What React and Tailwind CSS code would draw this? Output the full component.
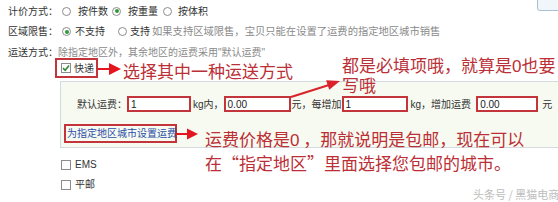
import React from 'react';

const font = { fontFamily: '"Liberation Sans", "Noto Sans CJK SC", sans-serif' };
const cjk = { fontFamily: '"Noto Sans CJK SC", "Liberation Sans", sans-serif' };

function Radio({ checked }) {
    return (
        <span className="w-[9px] h-[9px] rounded-full border border-[#8c8c8c] bg-white flex items-center justify-center shrink-0">
            {checked && <span className="w-[4px] h-[4px] rounded-full bg-[#2f9a3c]" />}
        </span>
    );
}

function Box({ checked }) {
    return (
        <span className="w-[10px] h-[10px] border border-[#8c8c8c] bg-white flex items-center justify-center shrink-0">
            {checked && (
                <svg width="8" height="8" viewBox="0 0 8 8">
                    <path d="M1 4.2 L3.2 6.3 L7 1.6" fill="none" stroke="#2f8a35" strokeWidth="1.6" />
                </svg>
            )}
        </span>
    );
}

function Field({ value, width }) {
    return (
        <div className={`${width} h-[16px] border-2 border-[#c4343b] bg-white flex items-center pl-[2px] text-[10px] text-[#222] shrink-0`}>
            {value}
        </div>
    );
}

export default function App() {
    return (
        <div className="relative w-[558px] h-[202px] bg-white overflow-hidden text-[#333] text-[10px]" style={font}>
            {/* corner of a button cut off at the top */}
            <div className="absolute left-[537px] top-[-10px] w-[30px] h-[21px] rounded-[3px] border border-[#a9bfd3] bg-[#f1f6fa]" />

            <div className="pl-[8px] pt-[1px]">
                <div className="h-[20px] flex items-center">
                    <span>计价方式：</span>
                    <span className="ml-[4px]"><Radio /></span>
                    <span className="ml-[7px]">按件数</span>
                    <span className="ml-[4px]"><Radio checked /></span>
                    <span className="ml-[7px]">按重量</span>
                    <span className="ml-[5px]"><Radio /></span>
                    <span className="ml-[6px]">按体积</span>
                </div>
                <div className="h-[21px] flex items-center">
                    <span>区域限售：</span>
                    <span className="ml-[4px]"><Radio checked /></span>
                    <span className="ml-[4px]">不支持</span>
                    <span className="ml-[13px]"><Radio /></span>
                    <span className="ml-[3px]">支持</span>
                    <span className="ml-[2px] text-[#8a8a8a] text-[10.3px] whitespace-nowrap">如果支持区域限售，宝贝只能在设置了运费的指定地区城市销售</span>
                </div>
                <div className="h-[21px] flex items-center">
                    <span>运送方式：</span>
                    <span className="text-[#8a8a8a] whitespace-nowrap">除指定地区外，其余地区的运费采用"默认运费"</span>
                </div>

                <div className="ml-[47px] mt-[-5px] w-[43px] h-[20px] border-2 border-[#c4343b] flex items-center pl-[4px] gap-[3px] relative z-10">
                    <Box checked />
                    <span>快递</span>
                </div>

                <div className="ml-[52px] mt-[3px] w-[520px] h-[67px] border border-[#d3dbe0] bg-[#f7faf1] pt-[14px]">
                    <div className="flex items-center h-[16px] pl-[16px] whitespace-nowrap">
                        <span>默认运费：</span>
                        <Field value="1" width="w-[64px]" />
                        <span className="ml-[2px]">kg内，</span>
                        <Field value="0.00" width="w-[67px]" />
                        <span className="ml-[1px]">元，每增加</span>
                        <Field value="1" width="w-[66px]" />
                        <span className="ml-[3px]">kg，增加运费</span>
                        <span className="ml-[5px]"><Field value="0.00" width="w-[62px]" /></span>
                        <span className="ml-[4px]">元</span>
                    </div>
                    <div className="mt-[12px] ml-[3px] w-[113px] h-[19px] border-2 border-[#c4343b] flex items-center pl-[1px] text-[#2b4fa8] whitespace-nowrap">
                        为指定地区城市设置运费
                    </div>
                </div>

                <div className="ml-[53px] mt-[11px] h-[11px] flex items-center gap-[4px]">
                    <Box />
                    <span>EMS</span>
                </div>
                <div className="ml-[53px] mt-[9px] h-[11px] flex items-center gap-[4px]">
                    <Box />
                    <span>平邮</span>
                </div>
            </div>

            {/* annotation arrows */}
            <svg className="absolute left-0 top-0 pointer-events-none" width="558" height="202">
                <line x1="98" y1="69" x2="111" y2="69" stroke="#e3161f" strokeWidth="2" />
                <polygon points="109,63 121,69 109,75" fill="#e3161f" />
                <line x1="291" y1="97" x2="329" y2="85" stroke="#d9222a" strokeWidth="2" />
                <polygon points="329.2,89.8 326.1,80.3 340,81" fill="#d9222a" />
                <line x1="176" y1="134" x2="189" y2="134" stroke="#e3161f" strokeWidth="2" />
                <polygon points="187,128.5 198,134 187,139.5" fill="#e3161f" />
            </svg>

            {/* annotation text */}
            <div className="absolute left-[123px] top-[61px] text-[17px] leading-[20px] text-[#bb2f36] whitespace-nowrap" style={cjk}>
                选择其中一种运送方式
            </div>
            <div className="absolute left-[342px] top-[55px] text-[17px] leading-[20px] text-[#bb2f36] whitespace-nowrap" style={cjk}>
                <div className="h-[20px]">都是必填项哦，就算是<span style={font}>0</span>也要</div>
                <div className="h-[20px]">写哦</div>
            </div>
            <div className="absolute left-[205px] top-[128px] text-[17px] leading-[22px] text-[#bb2f36] whitespace-nowrap" style={cjk}>
                <div>运费价格是<span style={font}>0</span> ，那就说明是包邮，现在可以</div>
                <div>在“指定地区”里面选择您包邮的城市。</div>
            </div>

            <div className="absolute left-[473px] top-[186px] text-[11px] text-[#bdbdbd] whitespace-nowrap" style={cjk}>
                头条号 / 黑猫电商
            </div>
        </div>
    );
}
